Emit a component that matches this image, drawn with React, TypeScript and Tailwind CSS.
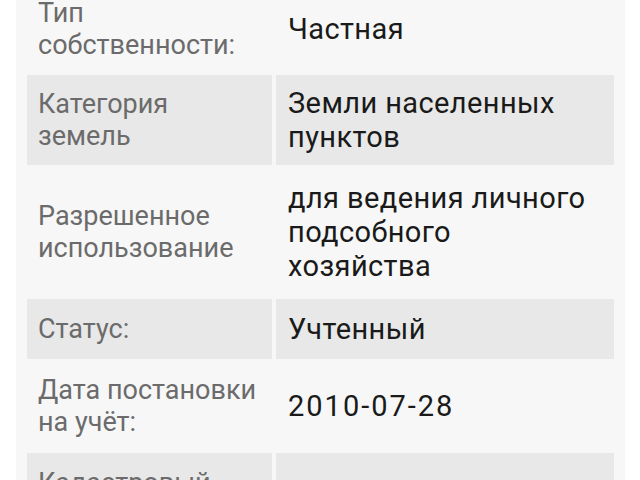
import React from 'react';

type Row = { label: string[]; value: string[]; shaded: boolean; pad: string };

const rows: Row[] = [
  { label: ['Тип', 'собственности:'], value: ['Частная'], shaded: false, pad: 'py-[14px]' },
  { label: ['Категория', 'земель'], value: ['Земли населенных', 'пунктов'], shaded: true, pad: 'py-[11px]' },
  { label: ['Разрешенное', 'использование'], value: ['для ведения личного', 'подсобного', 'хозяйства'], shaded: false, pad: 'py-[16px]' },
  { label: ['Статус:'], value: ['Учтенный'], shaded: true, pad: 'py-[13px]' },
  { label: ['Дата постановки', 'на учёт:'], value: ['2010-07-28'], shaded: false, pad: 'py-[15px]' },
  { label: ['Кадастровый', 'номер:'], value: [''], shaded: true, pad: 'py-[14px]' },
];

const App: React.FC = () => {
  return (
    <div className="w-[640px] h-[480px] overflow-hidden bg-white" style={{ fontFamily: 'Roboto, "Noto Sans", sans-serif' }}>
      <div className="ml-[16px] w-[609px] -mt-[17px] bg-[#f7f7f7] px-[11px]">
        {rows.map((row, i) => (
          <div key={i} className="flex gap-[4px]">
            <div className={`w-[245px] shrink-0 flex flex-col justify-center ${row.pad} pl-[11px] text-[27px] leading-[32px] text-[#6b6b6b] ${row.shaded ? 'bg-[#e8e8e8]' : ''}`}>
              {row.label.map((l, j) => (
                <span key={j}>{l}</span>
              ))}
            </div>
            <div className={`flex-1 flex flex-col justify-center ${row.pad} pl-[12px] text-[29px] leading-[34px] tracking-[0.4px] text-[#1a1a1a] ${row.shaded ? 'bg-[#e8e8e8]' : ''}`}>
              {row.value.map((v, j) => (
                <span key={j} className={/\d/.test(v) ? 'tracking-[2px]' : ''}>{v || '\u00a0'}</span>
              ))}
            </div>
          </div>
        ))}
      </div>
    </div>
  );
};

export default App;
